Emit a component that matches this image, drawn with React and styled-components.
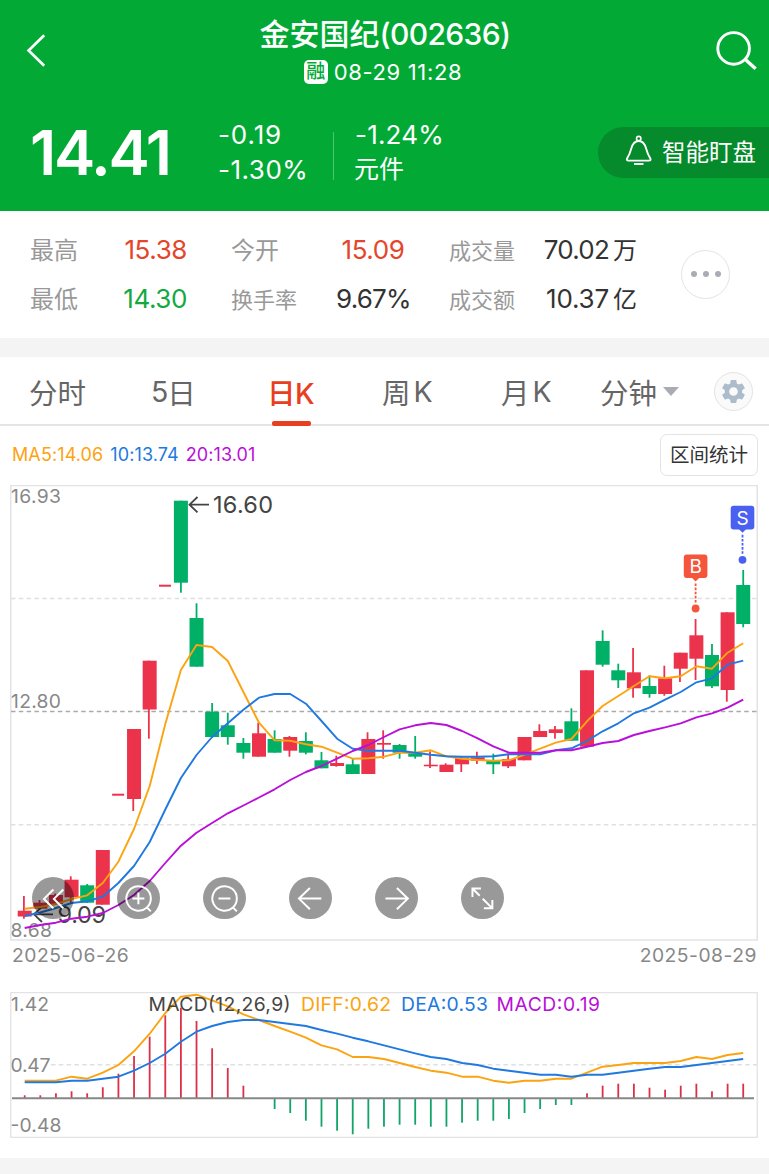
import React from 'react'
import styled, { createGlobalStyle } from 'styled-components'
import { MdSettings } from 'react-icons/md'

const RED = '#ec334c'
const GREEN = '#00b066'
const ORANGE = '#fca311'
const BLUE = '#2079e0'
const PURPLE = '#b90fd8'

const STEP = 15.62
const FIRST = 24.7
const xAt = (i) => FIRST + i * STEP

// [up, bodyTop, bodyBottom, high, low]
const candles = [
  [1, 910.7, 916.5, 896, 918.7], [1, 902.7, 908.7, 900, 910], [1, 895, 904, 893.5, 905],
  [1, 879.7, 897.3, 876.3, 902.7], [0, 885.3, 902.7, 884, 903], [1, 850, 904.7, 850, 904.7],
  [1, 793.7, 795.7, 793.7, 795.7], [1, 729, 799, 729, 811], [1, 660.7, 709.5, 660.7, 738.7],
  [1, 584.7, 586.7, 584.7, 586.7], [0, 500.7, 582.7, 500.7, 592.7], [0, 618, 666.7, 603.3, 666.7],
  [0, 711.7, 737, 703, 738], [0, 725.3, 737, 712.7, 744.7], [0, 743, 752.7, 738, 758.7],
  [1, 733.3, 756.7, 722.7, 756.7], [0, 739, 752.7, 730.3, 752.7], [1, 737, 750.7, 736, 756.7],
  [0, 741, 752.7, 732.3, 754.3], [0, 760.3, 768.3, 752, 768.3], [1, 763, 766, 755.7, 766.7],
  [0, 764.3, 774, 758.7, 774], [1, 739, 774, 732.3, 774], [1, 743, 744.7, 730.3, 758.7],
  [0, 745, 752.7, 744, 758.7], [0, 752.7, 756.7, 736, 758.7], [1, 764.7, 766.3, 751.3, 768],
  [1, 764.7, 772, 763.3, 772], [1, 757.7, 764.3, 757, 772], [1, 757.3, 760.7, 751.7, 764],
  [0, 760.7, 764.3, 753.7, 774], [1, 759, 766.3, 753.7, 768], [1, 737, 760.3, 737, 760.3],
  [1, 731, 737, 724.3, 737], [1, 729.3, 733, 726, 738.7], [0, 721.3, 740.7, 708.3, 740.7],
  [1, 670.3, 746.7, 670.3, 746.7], [0, 641, 664.7, 630.3, 666.7], [0, 670.3, 680.3, 663.7, 688],
  [1, 672.3, 688.3, 648, 697.7], [0, 686, 694, 675.3, 697.7], [1, 678.3, 694, 665.7, 695.7],
  [1, 652.7, 668.7, 652.7, 682], [1, 635.3, 658.7, 619, 680], [0, 655, 686.3, 644, 688],
  [1, 612.3, 690, 612.3, 701.7], [0, 585, 624, 570, 627.3],
]

const ma5 = [
  908.7, 907, 904, 899, 895.3, 883, 861.7, 829, 786, 724, 670, 645, 647, 661, 692, 722.7,
  740.3, 740.7, 744.3, 746.7, 752.7, 758.7, 758.3, 756.7, 752.7, 752.7, 750.3, 756.3, 758.7,
  760, 760.7, 760.3, 754.7, 748.7, 742.7, 739, 721.3, 706, 696, 686, 676.3, 678.3, 676.3,
  666.3, 668.7, 652.7, 643.3,
]
const ma10 = [
  916, 912.5, 908, 903, 901.3, 896.7, 883, 866, 842, 809.5, 778, 755, 737, 723.3, 709.7,
  697.7, 694, 694, 703.7, 721, 738.7, 748.7, 750.7, 750.7, 750.7, 752.7, 754.7, 756.3, 756.7,
  756.7, 756.3, 754.3, 754.3, 754.3, 750.3, 748.3, 741, 731.3, 723.3, 713.3, 707.7, 699.7,
  692, 682.3, 678.3, 664.7, 660.7,
]
const ma20 = [
  928, 925, 922.7, 918.7, 916.7, 913, 905, 895, 881, 863, 845.7, 832.7, 823, 813.3, 805.5, 797.5,
  789.3, 780, 772, 766, 758.7, 751, 745, 737, 729.3, 725.3, 723, 725, 731, 738.3, 746.3,
  752.7, 752.7, 752.7, 750.3, 750.3, 746.7, 743, 741, 735, 731, 727.3, 723.3, 717.3, 713.3,
  707.7, 699.7,
]

// heights of the histogram, below zero = green
const macd = [
  2.7, 2.7, 4.7, 6.7, 4.7, 10.7, 24.3, 42, 61.3, 82.7, 90.3, 77, 49.7, 30, 12.3, 0,
  -11, -15, -22.7, -28.7, -32.7, -36.3, -30.7, -28.7, -26.7, -26.7, -28.7, -28.7, -24.7,
  -22.7, -22.7, -21, -15, -11, -7, -7, 4.7, 12.3, 14.3, 14.3, 10.3, 8.3, 12.3, 14.3, 6.7,
  14.3, 14.3,
]
const diff = [
  287, 287, 287, 275, 281, 263, 240, 199, 146, 84, 35, 29, 46, 64, 88, 105, 123, 140, 158,
  181, 193, 216, 216, 222, 234, 246, 257, 263, 275, 275, 287, 293, 287, 287, 281, 281, 263,
  245, 240, 234, 234, 234, 228, 216, 222, 210, 204,
].map((v) => 985 + v / 3)
const dea = [
  292, 292, 292, 287, 287, 281, 275, 257, 234, 206, 170, 140, 123, 111, 105, 105, 111, 117,
  123, 135, 146, 158, 169, 181, 193, 205, 216, 222, 234, 240, 251, 257, 263, 269, 269, 275,
  269, 269, 263, 257, 251, 246, 246, 240, 234, 228, 222,
].map((v) => 985 + v / 3)

const toPoints = (list) => list.map((y, i) => `${xAt(i).toFixed(1)},${y.toFixed(1)}`).join(' ')

function Candle({ i, data }) {
  const [up, top, bottom, high, low] = data
  const flat = high === top && low === bottom && bottom - top < 3
  const w = flat ? 12 : 14
  const x = xAt(i) - (flat ? 6.3 : 7)
  return (
    <g fill={up ? RED : GREEN}>
      <rect x={x} y={top} width={w} height={bottom - top} />
      {!flat && <rect x={xAt(i) - (up ? 1.7 : 0.9)} y={high} width="1.8" height={low - high} />}
    </g>
  )
}

function Marker({ x, y, color, letter }) {
  return (
    <g>
      <path d={`M${x - 4} ${y + 23} L${x} ${y + 27} L${x + 4} ${y + 23} Z`} fill={color} />
      <rect x={x - 11.8} y={y} width="23.6" height="23.6" rx="3" fill={color} />
      <Label x={x} y={y + 18.8} $size="19px" $color="#fff" textAnchor="middle">{letter}</Label>
      <line x1={x} x2={x} y1={y + 29} y2={y + 48} stroke={color} strokeWidth="1.8" strokeDasharray="2.6 1.5" />
      <circle cx={x} cy={y + 54} r="3.9" fill={color} />
    </g>
  )
}

function KLine() {
  return (
    <Canvas viewBox="10 485 748 456" width="748" height="456">
      <rect x="10.8" y="485.5" width="746.4" height="454.5" fill="none" stroke="#e3e3e7" strokeWidth="1.5" />
      <GridLine x1="11" x2="757" y1="598.5" y2="598.5" />
      <GridLine x1="11" x2="757" y1="711.5" y2="711.5" $dark />
      <GridLine x1="11" x2="757" y1="824.7" y2="824.7" />
      <Label x="11" y="503" textLength="50">16.93</Label>
      <Label x="11" y="708.3" textLength="50">12.80</Label>
      <Label x="10.5" y="936.7" textLength="41.5">8.68</Label>
      {candles.map((c, i) => <Candle key={i} i={i} data={c} />)}
      <Label x="213" y="513" $size="23.5px" $color="#444" textLength="60">16.60</Label>
      <Arrow d="M209 504.7 H190 M197.5 497 L189.5 504.7 L197.5 512.4" />
      <Label x="57.5" y="923" $size="23.5px" $color="#444" textLength="48.5">9.09</Label>
      <Arrow d="M53 914.3 H34.5 M42 906.7 L34 914.3 L42 922" />
      <Curve points={toPoints(ma5)} stroke={ORANGE} />
      <Curve points={toPoints(ma10)} stroke={BLUE} />
      <Curve points={toPoints(ma20)} stroke={PURPLE} />
      <Marker x={695.6} y={554.5} color="#f4553b" letter="B" />
      <Marker x={742.5} y={505.8} color="#4a60f0" letter="S" />
    </Canvas>
  )
}

function Macd() {
  return (
    <Canvas viewBox="10 992 748 146" width="748" height="146">
      <rect x="10.8" y="992.6" width="746.4" height="144.8" fill="none" stroke="#e3e3e7" strokeWidth="1.3" />
      <GridLine x1="51" x2="757" y1="1064.8" y2="1064.8" />
      {macd.map((h, i) => h !== 0 && (
        <rect key={i} x={xAt(i) - 0.9} y={h > 0 ? 1098 - h : 1098} width="1.8" height={Math.abs(h)} fill={h > 0 ? '#dc3047' : '#11a468'} />
      ))}
      <line x1="12" x2="754" y1="1098.3" y2="1098.3" stroke="#878787" strokeWidth="1.9" />
      <Label x="11" y="1011" textLength="38">1.42</Label>
      <Label x="10.5" y="1071.7" textLength="40">0.47</Label>
      <Label x="10.5" y="1131.7" textLength="51">-0.48</Label>
      <Curve points={toPoints(diff)} stroke={ORANGE} />
      <Curve points={toPoints(dea)} stroke={BLUE} />
      <Label x="148.5" y="1011" $color="#444" textLength="142">MACD(12,26,9)</Label>
      <Label x="301" y="1011" $color={ORANGE} textLength="90">DIFF:0.62</Label>
      <Label x="401" y="1011" $color={BLUE} textLength="87">DEA:0.53</Label>
      <Label x="496.5" y="1011" $color={PURPLE} textLength="103.5">MACD:0.19</Label>
    </Canvas>
  )
}

const tools = [
  <path d="M21.5 12.5 L12 22 L21.5 31.5 M31.5 12.5 L22 22 L31.5 31.5" />,
  <path d="M34 34.5 L30 30.5 M21.5 15.5 V27.5 M15.5 21.5 H27.5 M34 21.5 A12.3 12.3 0 1 0 29.8 30.8 A12.3 12.3 0 0 0 34 21.5" />,
  <path d="M34 34.5 L30 30.5 M15.5 21.5 H27.5 M34 21.5 A12.3 12.3 0 1 0 29.8 30.8 A12.3 12.3 0 0 0 34 21.5" />,
  <path d="M32.5 21.7 H10 M21 11 L10 21.7 L21 32.4" />,
  <path d="M10.5 21.7 H33 M22 11 L33 21.7 L22 32.4" />,
  <path d="M11.5 20 V11.5 H20 M11.5 11.5 L18.8 18.8 M21.8 21.8 L31.5 31.5 M31.5 23 V31.5 H23" />,
]

function App() {
  return (
    <Page>
      <GlobalStyle />
      <Header>
        <TopBar>
          <svg width="30" height="40" viewBox="20 30 30 40" fill="none" stroke="#fff" strokeWidth="2.7">
            <path d="M44.2 35.3 L28.6 50.5 L44.2 65.7" />
          </svg>
          <Titles>
            <Title>金安国纪<span>(002636)</span></Title>
            <SubTitle><Badge>融</Badge>08-29 11:28</SubTitle>
          </Titles>
          <svg width="44" height="44" viewBox="714 28 44 44" fill="none" stroke="#fff" strokeWidth="2.9">
            <circle cx="733.6" cy="48.4" r="15.8" />
            <path d="M744.8 59 L755.6 68.8" strokeWidth="3.4" />
          </svg>
        </TopBar>
        <PriceRow>
          <Price>14.41</Price>
          <Change $width="115px">
            <Delta $space=".9px">-0.19</Delta>
            <Delta $space=".5px">-1.30%</Delta>
          </Change>
          <Divider />
          <Change>
            <Delta $space=".2px">-1.24%</Delta>
            <Industry>元件</Industry>
          </Change>
          <WatchButton>
            <svg width="28" height="32" viewBox="625 136 28 32" fill="none" stroke="#fff" strokeWidth="1.9" strokeLinejoin="round">
              <circle cx="638.7" cy="139.6" r="2.2" strokeWidth="1.6" />
              <path d="M638.7 142 C634.2 142 632.4 145.5 631.3 149.5 C630.2 153.5 629 156.5 627.2 159.3 C626.4 160.6 627 161.6 628.4 161.6 H649 C650.4 161.6 651 160.6 650.2 159.3 C648.4 156.5 647.2 153.5 646.1 149.5 C645 145.5 643.2 142 638.7 142 Z" />
              <path d="M634 165 H643.5" />
            </svg>
            智能盯盘
          </WatchButton>
        </PriceRow>
      </Header>

      <Stats>
        <StatColumn $width="157px">
          <Stat><Name $size="24px">最高</Name><Value $color="#e5452a">15.38</Value></Stat>
          <Stat><Name $size="24px">最低</Name><Value $color="#12aa3f">14.30</Value></Stat>
        </StatColumn>
        <StatColumn $width="179px">
          <Stat><Name $size="24px">今开</Name><Value $color="#e5452a" $boxed>15.09</Value></Stat>
          <Stat><Name>换手率</Name><Value $boxed $space="-.8px">9.67%</Value></Stat>
        </StatColumn>
        <StatColumn $width="188px">
          <Stat><Name>成交量</Name><Value $space="-.8px">70.02<Unit>万</Unit></Value></Stat>
          <Stat><Name>成交额</Name><Value $space="-.2px">10.37<Unit>亿</Unit></Value></Stat>
        </StatColumn>
        <MoreButton><i /><i /><i /></MoreButton>
      </Stats>

      <Gap />

      <Tabs>
        <Tab>分时</Tab>
        <Tab>5<Day>日</Day></Tab>
        <Tab $active>日K</Tab>
        <Tab>周<Letter>K</Letter></Tab>
        <Tab>月<Letter>K</Letter></Tab>
        <Tab>分钟<Caret /></Tab>
        <SettingButton><MdSettings size={29} /></SettingButton>
      </Tabs>

      <Legend>
        <Average $color={ORANGE}>MA5:14.06</Average>
        <Average $color={BLUE}>10:13.74</Average>
        <Average $color={PURPLE}>20:13.01</Average>
        <RangeButton>区间统计</RangeButton>
      </Legend>

      <ChartBox>
        <KLine />
        <ToolBar>
          {tools.map((icon, i) => (
            <ToolButton key={i}>
              <svg width="42.8" height="42.8" viewBox="0 0 43 43" fill="none" stroke="#fff" strokeWidth="2">{icon}</svg>
            </ToolButton>
          ))}
        </ToolBar>
      </ChartBox>
      <Dates>
        <span>2025-06-26</span>
        <span>2025-08-29</span>
      </Dates>
      <MacdBox>
        <Macd />
      </MacdBox>
      <Footer />
    </Page>
  )
}

const GlobalStyle = createGlobalStyle`
  *{
    box-sizing:border-box;
  }
  body{
    margin:0;
    background:#fff;
    font-family:Inter,"Noto Sans CJK SC",sans-serif;
  }
`

const Page = styled.div`
  width:769px;
  height:1174px;
  overflow:hidden;
  display:flex;
  flex-direction:column;
  background:#fff;
  white-space:nowrap;
`

const Header = styled.header`
  height:210.5px;
  flex:none;
  background:#02aa35;
  color:#fff;
`

const TopBar = styled.div`
  height:100px;
  padding:0 11px 0 20px;
  display:flex;
  justify-content:space-between;
  align-items:center;
`

const Titles = styled.div`
  display:flex;
  flex-direction:column;
  align-items:center;
  margin-left:6px;
  padding-top:6px;
`

const Title = styled.div`
  font-size:30px;
  line-height:38px;
  font-weight:500;
  span{
    letter-spacing:-.6px;
  }
`

const SubTitle = styled.div`
  display:flex;
  align-items:center;
  margin-left:-4px;
  font-size:22px;
  line-height:38px;
  letter-spacing:.65px;
`

const Badge = styled.span`
  width:24px;
  height:24px;
  margin-right:6px;
  border-radius:5px;
  background:#fff;
  color:#02aa35;
  font-size:19px;
  font-weight:500;
  line-height:23px;
  letter-spacing:0;
  text-align:center;
`

const PriceRow = styled.div`
  height:104px;
  padding-left:30px;
  display:flex;
  align-items:center;
`

const Price = styled.div`
  width:188px;
  font-size:62px;
  font-weight:600;
  letter-spacing:-2.2px;
`

const Change = styled.div`
  width:${(p) => p.$width || 'auto'};
`

const Delta = styled.div`
  font-size:26px;
  line-height:35px;
  letter-spacing:${(p) => p.$space};
`

const Industry = styled.div`
  margin-left:-1px;
  font-size:25px;
  line-height:35px;
`

const Divider = styled.div`
  width:1px;
  height:48px;
  margin-right:21px;
  margin-top:8px;
  background:#4ec472;
`

const WatchButton = styled.div`
  width:171px;
  height:51px;
  margin-left:auto;
  padding:0 0 2px 27px;
  display:flex;
  align-items:center;
  gap:9px;
  border-radius:26px 0 0 26px;
  background:#058a2c;
  font-size:23.5px;
`

const Stats = styled.section`
  height:127px;
  flex:none;
  padding:14px 0 0 30px;
  display:flex;
`

const StatColumn = styled.div`
  width:${(p) => p.$width};
  margin-right:44px;
  & + &{
    margin-right:39px;
  }
`

const Stat = styled.div`
  height:49px;
  display:flex;
  align-items:center;
  justify-content:space-between;
`

const Name = styled.span`
  padding-bottom:1px;
  font-size:${(p) => p.$size || '22px'};
  color:#999;
`

const Value = styled.span`
  width:${(p) => (p.$boxed ? '74px' : 'auto')};
  padding-top:2px;
  text-align:${(p) => (p.$boxed ? 'center' : 'right')};
  font-size:26px;
  line-height:34px;
  letter-spacing:${(p) => p.$space || '-.4px'};
  color:${(p) => p.$color || '#333'};
`

const Unit = styled.span`
  margin-left:4px;
  font-size:24px;
  letter-spacing:0;
`

const MoreButton = styled.div`
  width:49px;
  height:49px;
  margin-top:25px;
  margin-left:5px;
  display:flex;
  justify-content:center;
  align-items:center;
  gap:6px;
  border:1px solid #e3e3e3;
  border-radius:50%;
  i{
    width:6px;
    height:6px;
    border-radius:50%;
    background:#a9acb5;
  }
`

const Gap = styled.div`
  height:19.5px;
  flex:none;
  background:#f4f4f4;
`

const Tabs = styled.nav`
  height:69px;
  flex:none;
  padding-left:29px;
  display:grid;
  grid-template-columns:122px 118px 113px 119px 99px 114px 40px;
  align-items:center;
  border-bottom:2px solid #e4e4e4;
`

const Tab = styled.div`
  position:relative;
  display:flex;
  align-items:center;
  height:69px;
  padding-bottom:1px;
  font-size:28.5px;
  text-indent:${(p) => (p.$active ? '-2px' : '0')};
  letter-spacing:${(p) => (p.$active ? '-.5px' : 'normal')};
  color:${(p) => (p.$active ? '#e83f20' : '#666')};
  font-weight:${(p) => (p.$active ? 500 : 400)};
  &::after{
    content:'';
    display:${(p) => (p.$active ? 'block' : 'none')};
    position:absolute;
    left:3px;
    bottom:0;
    width:39px;
    height:5.5px;
    border-radius:2px;
    background:#e83f20;
  }
`

const Day = styled.span`
  margin-left:-1px;
`

const Letter = styled.span`
  margin-left:3px;
`

const Caret = styled.i`
  margin-left:6px;
  border:8px solid transparent;
  border-top:9px solid #a9acb5;
  border-bottom:0;
`

const SettingButton = styled.div`
  width:39px;
  height:39px;
  display:flex;
  justify-content:center;
  align-items:center;
  border:1px solid #e3e3e3;
  border-radius:50%;
  background:#fafafa;
  color:#adbccb;
`

const Legend = styled.div`
  height:59px;
  flex:none;
  padding:8px 11px 9px 12px;
  display:flex;
  gap:7px;
`

const Average = styled.span`
  font-size:18px;
  line-height:41px;
  letter-spacing:.1px;
  color:${(p) => p.$color};
`

const RangeButton = styled.div`
  width:98px;
  height:42px;
  margin-left:auto;
  border:1px solid #e3e3e3;
  border-radius:7px;
  font-size:19.5px;
  line-height:41px;
  text-align:center;
  color:#333;
`

const ChartBox = styled.div`
  position:relative;
  height:456px;
  flex:none;
  padding-left:10px;
`

const Canvas = styled.svg`
  display:block;
`

const Label = styled.text`
  font-size:${(p) => p.$size || '19.3px'};
  fill:${(p) => p.$color || '#888'};
`

const GridLine = styled.line`
  stroke:${(p) => (p.$dark ? '#aaa' : '#e0e0e3')};
  stroke-width:1.4;
  stroke-dasharray:4.5 3.3;
`

const Curve = styled.polyline`
  fill:none;
  stroke-width:1.9;
  stroke-linejoin:round;
`

const Arrow = styled.path`
  fill:none;
  stroke:#444;
  stroke-width:1.8;
`

const ToolBar = styled.div`
  position:absolute;
  left:31.5px;
  bottom:21.6px;
  display:flex;
  gap:43.15px;
`

const ToolButton = styled.div`
  width:42.8px;
  height:42.8px;
  border-radius:50%;
  background:rgba(0,0,0,.4);
`

const Dates = styled.div`
  height:51px;
  flex:none;
  padding:0 12px;
  display:flex;
  justify-content:space-between;
  font-size:19.3px;
  line-height:28px;
  letter-spacing:.5px;
  color:#888;
`

const MacdBox = styled.div`
  height:166px;
  flex:none;
  padding-left:10px;
`

const Footer = styled.div`
  flex:1;
  background:#f4f4f4;
`

export default App
